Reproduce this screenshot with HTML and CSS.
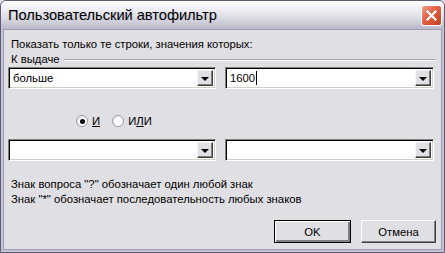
FILE: index.html
```html
<!DOCTYPE html>
<html lang="ru">
<head>
    <meta charset="UTF-8">
    <title>Пользовательский автофильтр</title>
    <link rel="stylesheet" href="styles.css">
</head>
<body>
    <div class="window">
        <div class="titlebar">
            <span class="title">Пользовательский автофильтр</span>
            <button class="close-btn" aria-label="Закрыть">
                <svg width="11" height="11" viewBox="0 0 11 11">
                    <path d="M1.5 1.5 L9.5 9.5 M9.5 1.5 L1.5 9.5" stroke="#fff" stroke-width="2.2" stroke-linecap="square"/>
                </svg>
            </button>
        </div>

        <div class="client">
            <div class="caption">Показать только те строки, значения которых:</div>
            <div class="group-label">
                <span>К выдаче</span>
                <div class="groove"></div>
            </div>

            <div class="combo-row first">
                <div class="combo">
                    <span class="combo-text">больше</span>
                    <span class="drop-btn"><i class="arrow"></i></span>
                </div>
                <div class="combo">
                    <span class="combo-text">1600<span class="caret"></span></span>
                    <span class="drop-btn"><i class="arrow"></i></span>
                </div>
            </div>

            <div class="radio-row">
                <label class="radio checked"><span class="dot"></span><span><u>И</u></span></label>
                <label class="radio"><span class="dot"></span><span>И<u>Л</u>И</span></label>
            </div>

            <div class="combo-row second">
                <div class="combo">
                    <span class="combo-text"></span>
                    <span class="drop-btn"><i class="arrow"></i></span>
                </div>
                <div class="combo">
                    <span class="combo-text"></span>
                    <span class="drop-btn"><i class="arrow"></i></span>
                </div>
            </div>

            <div class="hints">
                <div>Знак вопроса "?" обозначает один любой знак</div>
                <div>Знак "*" обозначает последовательность любых знаков</div>
            </div>

            <div class="buttons">
                <button class="btn default">OK</button>
                <button class="btn">Отмена</button>
            </div>
        </div>
    </div>
</body>
</html>
```

FILE: styles.css
```css
* {
    box-sizing: border-box;
}
body {
    margin: 0;
    background: #e0dfe3;
    font-family: "Liberation Sans", Arial, sans-serif;
    font-size: 11.3px;
    color: #000;
}
.window {
    width: 445px;
    height: 253px;
    display: flex;
    flex-direction: column;
    background: #c4c3d4;
    border: 1px solid #5c5c78;
    border-radius: 6px 6px 0 0;
    padding: 0 2px 2px 2px;
}
.titlebar {
    height: 28px;
    display: flex;
    align-items: center;
    justify-content: space-between;
    padding: 0 2px 0 7px;
    background: linear-gradient(to bottom, #ffffff 0%, #eeeef3 30%, #d8d8e2 65%, #b9b9c9 100%);
    border-radius: 5px 5px 0 0;
    margin: 0 -2px;
}
.title {
    font-size: 14.6px;
    color: #000;
    text-shadow: 1px 1px 0 #c8c8d4;
}
.close-btn {
    width: 21px;
    height: 21px;
    padding: 0;
    display: flex;
    align-items: center;
    justify-content: center;
    border: 1px solid #fff;
    border-radius: 3px;
    background: linear-gradient(135deg, #f0a090 0%, #e0603f 45%, #c53f20 100%);
    margin-top: 1px;
}
.client {
    flex: 1;
    background: #e0dfe3;
    border: 1px solid #9d9db4;
    padding: 0 5px 0 4px;
    display: flex;
    flex-direction: column;
}
.caption {
    margin-top: 8px;
    padding-left: 3px;
    line-height: 13px;
}
.group-label {
    display: flex;
    align-items: center;
    gap: 4px;
    margin-top: 2px;
    padding-left: 3px;
    line-height: 13px;
}
.groove {
    flex: 1;
    height: 2px;
    border-top: 1px solid #a5a5ad;
    border-bottom: 1px solid #fff;
}
.combo-row {
    display: grid;
    grid-template-columns: 208px 209px;
    column-gap: 9px;
}
.combo-row.first {
    margin-top: 1px;
}
.combo-row.second {
    margin-top: 11px;
}
.combo {
    height: 22px;
    display: flex;
    align-items: center;
    background: #fff;
    border-top: 1px solid #808080;
    border-left: 1px solid #808080;
    border-right: 1px solid #fff;
    border-bottom: 1px solid #fff;
    box-shadow: inset 1px 1px 0 #000, inset -1px -1px 0 #d4d0c8;
    padding: 2px 2px 2px 3px;
}
.combo-text {
    flex: 1;
    padding-left: 1px;
    display: flex;
    align-items: center;
    height: 100%;
}
.caret {
    display: inline-block;
    width: 1px;
    height: 14px;
    background: #000;
    margin-left: 1px;
}
.drop-btn {
    width: 16px;
    height: 16px;
    background: #e0dfe3;
    border-top: 1px solid #f4f4f4;
    border-left: 1px solid #f4f4f4;
    border-right: 1px solid #404040;
    border-bottom: 1px solid #404040;
    box-shadow: inset -1px -1px 0 #808080;
    display: flex;
    align-items: center;
    justify-content: center;
}
.arrow {
    width: 0;
    height: 0;
    border-left: 4px solid transparent;
    border-right: 4px solid transparent;
    border-top: 4px solid #000;
    margin-top: 1px;
}
.radio-row {
    display: flex;
    gap: 12px;
    margin-top: 25px;
    padding-left: 68px;
    height: 14px;
    align-items: center;
}
.radio {
    display: flex;
    align-items: center;
    gap: 4px;
}
.dot {
    width: 12px;
    height: 12px;
    border-radius: 50%;
    border: 1px solid #9a9aa8;
    background: radial-gradient(circle at 65% 65%, #ffffff 40%, #dcdce4 100%);
    display: flex;
    align-items: center;
    justify-content: center;
}
.radio.checked .dot::after {
    content: "";
    width: 5px;
    height: 5px;
    border-radius: 50%;
    background: #000;
}
.hints {
    margin-top: 16px;
    padding-left: 3px;
    line-height: 15px;
}
.buttons {
    display: flex;
    justify-content: flex-end;
    gap: 10px;
    margin-top: 13px;
}
.btn {
    width: 75px;
    height: 23px;
    font-family: "Liberation Sans", Arial, sans-serif;
    font-size: 11.3px;
    background: #e0dfe3;
    border-top: 1px solid #fff;
    border-left: 1px solid #fff;
    border-right: 1px solid #404040;
    border-bottom: 1px solid #404040;
    box-shadow: inset -1px -1px 0 #808080;
    padding: 0;
}
.btn.default {
    width: 77px;
    border: 1px solid #000;
    box-shadow: inset 1px 1px 0 #fff, inset -2px -2px 0 #808080;
}
```
